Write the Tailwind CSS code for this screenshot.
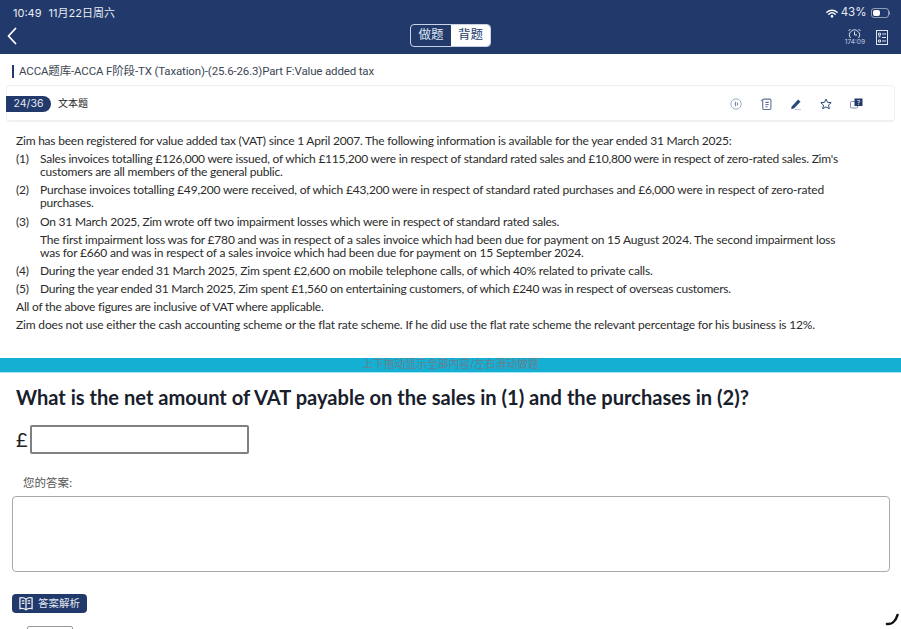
<!DOCTYPE html>
<html lang="zh">
<head>
<meta charset="utf-8">
<script src="https://cdn.jsdelivr.net/npm/@tailwindcss/browser@4"></script>
</head>
<body class="bg-white">
<div class="relative w-[901px] h-[629px] overflow-hidden bg-white font-['Inter','Noto_Sans_CJK_SC',sans-serif]">
  <header class="h-[54px] bg-[#21396b] text-white flex flex-col">
    <div class="h-[24px] pt-[2px] flex items-center justify-between pl-[13px] pr-[11px] text-[11px] text-[#e8ecf4]">
      <div class="flex gap-[7px]"><span>10:49</span><span>11月22日周六</span></div>
      <div class="flex items-center gap-[3px]">
        <svg width="12" height="9" viewBox="0 0 14 10" fill="none" stroke="#fff" stroke-width="1.6" stroke-linecap="round"><path d="M1 3.6C4.5 .5 9.5 .5 13 3.6M3.2 5.8c2.2-1.9 5.4-1.9 7.600 0"/><circle cx="7" cy="8.3" r=".8" fill="#fff"/></svg>
        <span class="text-[11.5px]">43%</span>
        <div class="flex items-center ml-[1px]">
          <div class="w-[18px] h-[10px] rounded-[3px] border border-white/50 p-[1px]"><div class="w-[7px] h-full bg-white rounded-[2px]"></div></div>
          <div class="w-[1.5px] h-[4px] bg-white/50 rounded-r"></div>
        </div>
      </div>
    </div>
    <div class="flex-1 flex items-center justify-between pl-[7px] pr-[13px] relative">
      <svg width="10" height="18" viewBox="0 0 10 18" fill="none" stroke="#fff" stroke-width="1.8" stroke-linecap="round" stroke-linejoin="round" class="-mt-[6px]"><path d="M8.500 1.500 1.500 9l7 7.500"/></svg>
      <div class="absolute left-[410px] top-[0px] flex h-[23px] w-[81px] rounded-[4px] border border-[#c9d2e2] text-[12.5px] overflow-hidden">
        <div class="w-[40px] flex items-center justify-center text-[#dfe5ef]">做题</div>
        <div class="flex-1 bg-white text-[#21396b] flex items-center justify-center">背题</div>
      </div>
      <div class="flex items-center gap-[11px] -mt-[4px]">
        <div class="flex flex-col items-center">
          <svg width="15" height="11" viewBox="0 0 14 11" fill="none" stroke="#dfe5ef" stroke-width="1"><path d="M3 10A5 5 0 1 1 11 10"/><path d="M7 3.500V7h2.500M1 3l2-2M13 3l-2-2"/></svg>
          <span class="text-[6.5px] leading-[7px] text-[#c9d2e2]">174:09</span>
        </div>
        <svg width="12" height="15" viewBox="0 0 12 15" fill="none" stroke="#dfe5ef" stroke-width="1"><rect x=".5" y=".5" width="11" height="14"/><path d="M2.500 3.200h2v2h-2zM2.500 6.800h2M2.500 10h2v2h-2zM6 4h4M6 7.500h4M6 11h4"/></svg>
      </div>
    </div>
  </header>

  <div class="h-[31px] flex items-center pl-[12px] pt-[4px] text-[11.5px] tracking-[-0.15px] text-[#3d4654] font-['Roboto','Noto_Sans_CJK_SC',sans-serif]">
    <div class="w-[2px] h-[13px] bg-[#21396b] mr-[5px]"></div>
    <span class="whitespace-nowrap">ACCA题库-ACCA F阶段-TX (Taxation)-(25.6-26.3)Part F:Value added tax</span>
  </div>

  <div class="ml-[6px] mr-[6px] h-[37px] rounded-[4px] border border-[#f0f0f0] border-b-2 flex items-center">
    <div class="w-[45px] h-[16px] -ml-[1px] mt-[1px] bg-[#21396b] text-[#e3e8f1] text-[10.5px] rounded-r-full flex items-center justify-center pr-[0px]">24/36</div>
    <span class="ml-[7px] mt-[1px] text-[10px] text-[#222]">文本题</span>
    <div class="ml-auto mr-[31px] mt-[1px] flex items-center gap-[18px] text-[#21396b]">
      <svg width="12" height="12" viewBox="0 0 12 12" fill="none"><circle cx="6" cy="6" r="5.200" stroke="#9fadc6"/><path d="M4.500 6l1.500-3v6z" fill="#6b7fa6"/><path d="M7 4.500a2 2 0 0 1 0 3" stroke="#6b7fa6"/></svg>
      <svg width="12" height="12" viewBox="0 0 11 11" fill="none" stroke="#5c7097"><rect x="2.500" y="1" width="7.500" height="9.500" rx="1"/><path d="M1 2.500l1.500-1M5 4h3M5 6h3M5 8h2"/></svg>
      <svg width="12" height="12" viewBox="0 0 11 12"><path d="M1 8.800 7.600 1.500 10 3.800 3.400 10.400 .8 11z" fill="#2b4679"/><path d="M5 11.500h6" stroke="#8797b5" stroke-dasharray="1 1"/></svg>
      <svg width="12" height="12" viewBox="0 0 12 12" fill="none" stroke="#2b4679" stroke-linejoin="round"><path d="M6 1l1.500 3.300 3.700.4-2.700 2.400.8 3.600L6 8.900l-3.300 1.800.8-3.600L.8 4.700l3.700-.4z"/></svg>
      <svg width="13" height="11" viewBox="0 0 13 11"><rect x=".5" y="3.500" width="7" height="6.500" rx="1" fill="none" stroke="#7f90b0"/><rect x="4.500" y=".5" width="8" height="7.500" fill="#21396b"/><text x="8.500" y="6.500" font-size="6" fill="#fff" text-anchor="middle">?</text></svg>
    </div>
  </div>

  <section class="mt-[12px] pl-[16px] text-[12px] tracking-[-0.22px] leading-[13px] text-[#2b2b2b] font-['Lato','Noto_Sans',sans-serif] whitespace-nowrap">
    <p>Zim has been registered for value added tax (VAT) since 1 April 2007. The following information is available for the year ended 31 March 2025:</p>
    <div class="mt-[5px] flex"><span class="w-[24px]">(1)</span><p class="tracking-[-0.23px]">Sales invoices totalling £126,000 were issued, of which £115,200 were in respect of standard rated sales and £10,800 were in respect of zero-rated sales. Zim's<br>customers are all members of the general public.</p></div>
    <div class="mt-[5px] flex"><span class="w-[24px]">(2)</span><p class="tracking-[-0.18px]">Purchase invoices totalling £49,200 were received, of which £43,200 were in respect of standard rated purchases and £6,000 were in respect of zero-rated<br>purchases.</p></div>
    <div class="mt-[6px] flex"><span class="w-[24px]">(3)</span><p>On 31 March 2025, Zim wrote off two impairment losses which were in respect of standard rated sales.</p></div>
    <p class="mt-[5px] ml-[24px] tracking-[-0.2px]">The first impairment loss was for £780 and was in respect of a sales invoice which had been due for payment on 15 August 2024. The second impairment loss<br>was for £660 and was in respect of a sales invoice which had been due for payment on 15 September 2024.</p>
    <div class="mt-[5px] flex"><span class="w-[24px]">(4)</span><p class="tracking-[-0.2px]">During the year ended 31 March 2025, Zim spent £2,600 on mobile telephone calls, of which 40% related to private calls.</p></div>
    <div class="mt-[5px] flex"><span class="w-[24px]">(5)</span><p class="tracking-[-0.25px]">During the year ended 31 March 2025, Zim spent £1,560 on entertaining customers, of which £240 was in respect of overseas customers.</p></div>
    <p class="mt-[5px]">All of the above figures are inclusive of VAT where applicable.</p>
    <p class="mt-[5px] tracking-[-0.17px]">Zim does not use either the cash accounting scheme or the flat rate scheme. If he did use the flat rate scheme the relevant percentage for his business is 12%.</p>
  </section>

  <div class="mt-[27px] h-[15px] bg-[#16afd4] border-b border-[#a5e6f3] flex items-center justify-center text-[10.8px] text-[#66808e]">上下拖动显示全部内容/左右滑动做题</div>

  <h2 class="mt-[12px] pl-[16px] text-[20.1px] leading-[24px] font-bold text-[#18202c] font-['Lato','Noto_Sans',sans-serif] whitespace-nowrap">What is the net amount of VAT payable on the sales in (1) and the purchases in (2)?</h2>

  <div class="mt-[15px] pl-[16px] flex items-center gap-[4px] text-[#222] font-['Lato',sans-serif]">
    <span class="text-[20px] w-[10px]">£</span>
    <div class="w-[219px] h-[29px] border-2 border-[#808080] rounded-[2px]"></div>
  </div>

  <p class="mt-[22px] pl-[23px] text-[11.5px] leading-[14px] text-[#555]">您的答案:</p>
  <div class="mt-[6px] mx-[11.5px] h-[76px] border border-[#aaaaaa] rounded-[4px]"></div>

  <div class="mt-[22px] ml-[12px] w-[75px] h-[19px] rounded-[4px] bg-[#21396b] flex items-center pl-[6px] gap-[4px] text-[10.5px] text-[#e3e8f1]">
    <svg width="16" height="16" viewBox="0 0 15 15" fill="none" stroke="#eef1f6" stroke-width="1.200"><path d="M7.500 3C6 1.600 3.500 1.400 1.800 1.800v10c1.700-.4 4.200-.2 5.700 1.200 1.500-1.400 4-1.600 5.700-1.200v-10C11.500 1.400 9 1.600 7.500 3zM7.500 3v10M3.500 4.500h2.500M3.500 7h2.500M9 4.500h2.500M9 7h2.500"/></svg>
    <span>答案解析</span>
  </div>

  <div class="mt-[13px] ml-[27px] w-[46px] h-[10px] border border-[#9a9a9a] rounded-t-[2px]"></div>

  <svg class="absolute left-[885px] top-[612px]" width="15" height="15" viewBox="0 0 15 15" fill="none" stroke="#111" stroke-width="2.600" stroke-linecap="round"><path d="M2 12C6 12.500 10.500 10 12.500 3"/></svg>
</div>
</body>
</html>
